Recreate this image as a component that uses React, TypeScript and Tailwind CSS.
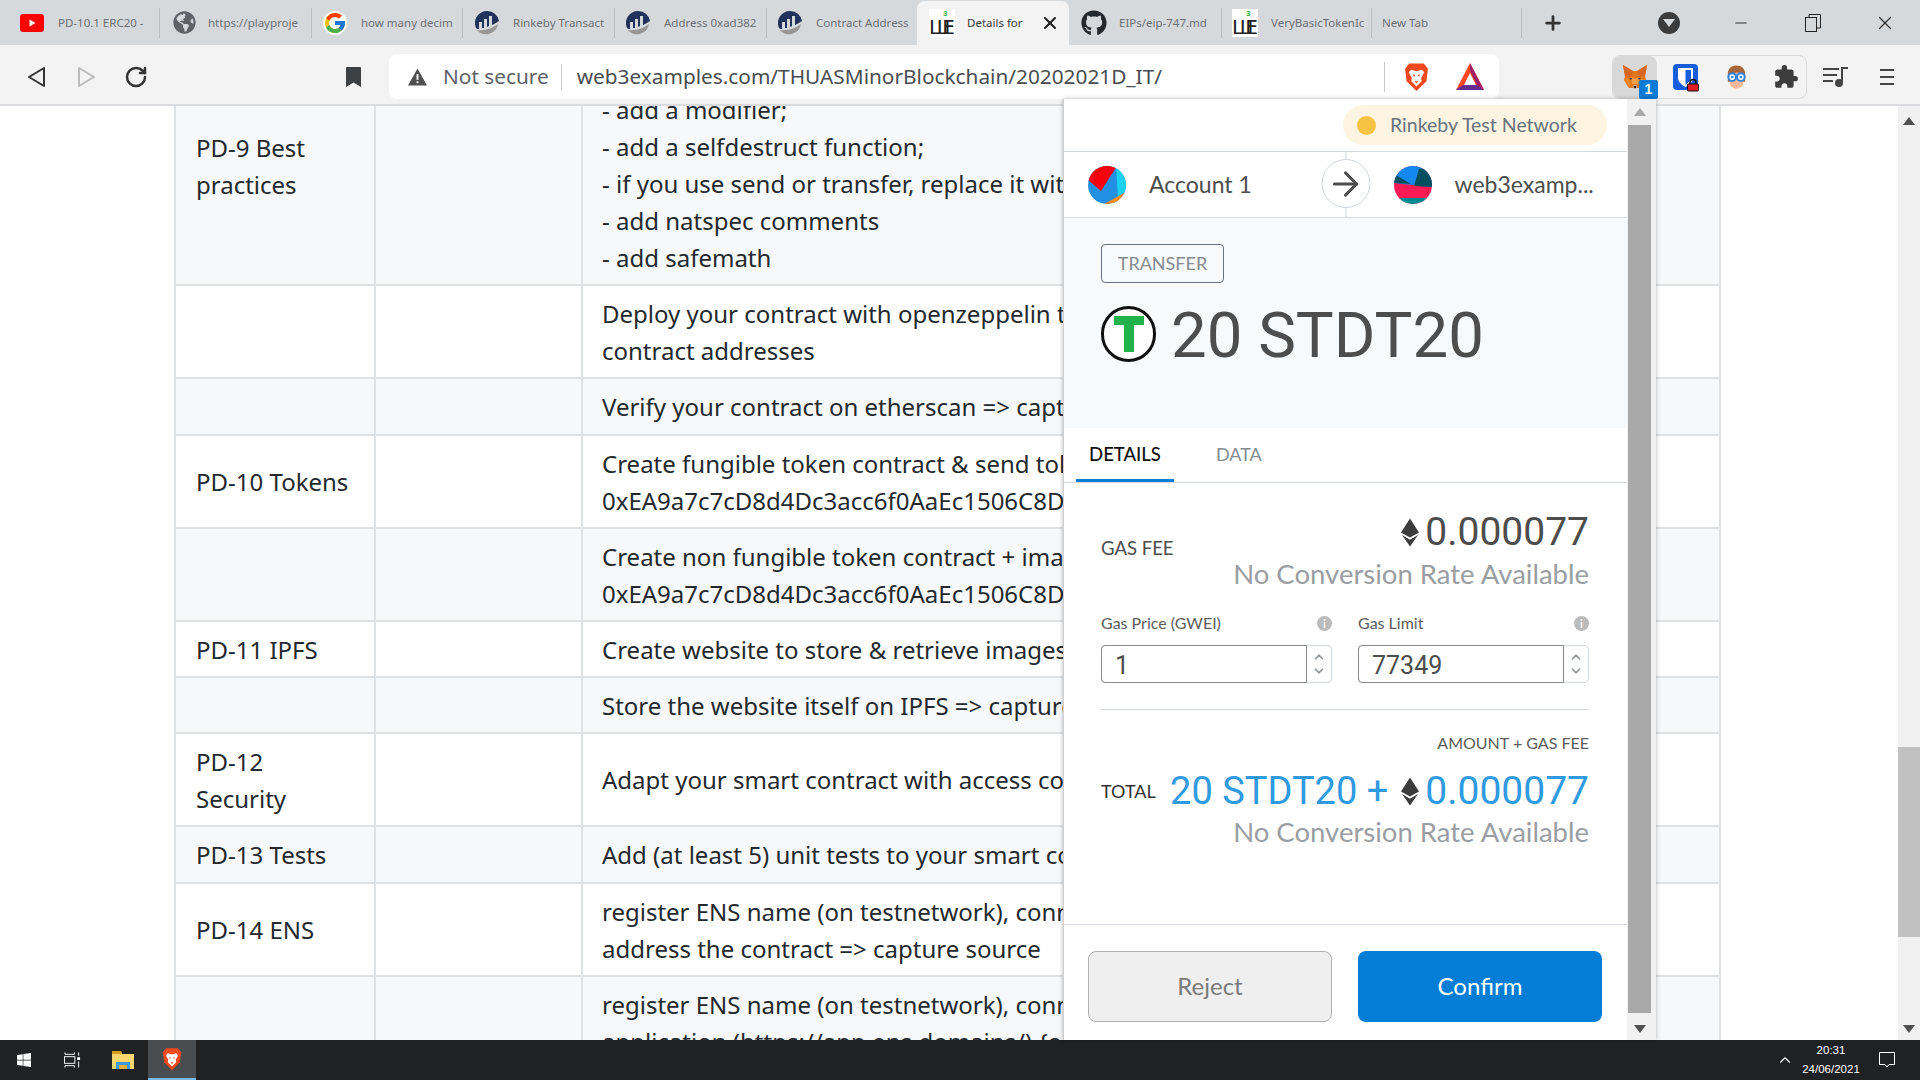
import { FaGithub, FaGlobeAmericas, FaWindows } from 'react-icons/fa'
import { FcGoogle } from 'react-icons/fc'
import { MdExtension } from 'react-icons/md'
import { ArrowRight, ChevronDown, ChevronUp, Plus, X, Minus, RotateCw } from 'lucide-react'

function YoutubeIcon() {
  return (
    <svg viewBox="0 0 24 18" className="h-[18px] w-[24px] shrink-0">
      <rect width="24" height="18" rx="3" fill="#f00" />
      <path d="M9.5 5.5 L15.5 9 L9.5 12.5 Z" fill="#fff" />
    </svg>
  )
}

function EtherscanIcon() {
  return (
    <svg viewBox="0 0 24 24" className="h-[24px] w-[24px] shrink-0">
      <path d="M2 19 A12 12 0 0 0 23 13 C18 17 10 20 2 19 Z" fill="#979695" />
      <path d="M12 0 A12 12 0 0 0 1 17 L1 17 C2 18 3 18 4 18 V11 H7 V17 L9 17 V8 H12 V16 L14 15 V5 H17 V14 C20 13 22 11 24 10 A12 12 0 0 0 12 0 Z" fill="#21325b" />
    </svg>
  )
}

function WeLogo() {
  return (
    <svg viewBox="0 0 26 28" className="h-[28px] w-[26px] shrink-0">
      <rect width="26" height="28" fill="#fff" />
      <text x="14" y="7" fontSize="8" fontWeight="700" fill="#3fae49" fontFamily="Liberation Sans, sans-serif">3</text>
      <text x="0" y="25" fontSize="20" fontWeight="400" fill="#222" fontFamily="DejaVu Sans, sans-serif" textLength="26">ШE</text>
    </svg>
  )
}

function BraveIcon({ size }: { size: string }) {
  return (
    <svg viewBox="0 0 24 28" className={size}>
      <path d="M5 1 H19 L23 6 L21.5 18 L12 27.5 L2.5 18 L1 6 Z" fill="#f1491d" />
      <path d="M7 7 L12 8.5 L17 7 L19.5 9.5 L16.5 15 L17 18 L12 23 L7 18 L7.5 15 L4.5 9.5 Z" fill="#fff" />
      <path d="M9 11 L11 13 L9 13.5 Z M15 11 L13 13 L15 13.5 Z M10 18 H14 L12 20 Z" fill="#f1491d" />
    </svg>
  )
}

function BatIcon() {
  return (
    <svg viewBox="0 0 30 30" className="h-[30px] w-[30px]">
      <path d="M15 1 L29 28 H1 Z" fill="#ff4724" />
      <path d="M15 1 L29 28 L22 23 L15 9 Z" fill="#9e1f63" />
      <path d="M1 28 H29 L22 23 H8 Z" fill="#662d91" />
      <path d="M15 11 L21 23 H9 Z" fill="#fff" />
    </svg>
  )
}

function FoxIcon() {
  return (
    <svg viewBox="0 0 26 26" className="h-[26px] w-[26px]">
      <path d="M1 1 L11 7 H15 L25 1 L23 12 L24 16 L19 24 H15 L13 22 L11 24 H7 L2 16 L3 12 Z" fill="#e2761b" />
      <path d="M1 1 L11 7 L9 13 L3 12 Z M25 1 L15 7 L17 13 L23 12 Z" fill="#d7671f" />
      <path d="M2 16 L7 14 L9 19 L7 24 Z M24 16 L19 14 L17 19 L19 24 Z" fill="#f6851b" />
      <path d="M9 13 L13 15 L17 13 L16 20 H10 Z" fill="#f6a04d" />
      <path d="M11 21 H15 L14 25 H12 Z" fill="#c0ad9e" />
      <path d="M12 22 H14 V24 H12 Z" fill="#24221f" />
      <path d="M7 14 L10 14 L9 16 Z M19 14 L16 14 L17 16 Z" fill="#233447" />
    </svg>
  )
}

function BitwardenIcon() {
  return (
    <div className="relative h-[26px] w-[25px]">
      <svg viewBox="0 0 25 26" className="h-[26px] w-[25px]">
        <rect width="25" height="26" rx="4" fill="#175ddc" />
        <path d="M5 4 H20 V14 C20 18 16 21 12.5 23 C9 21 5 18 5 14 Z" fill="#fff" />
        <path d="M12.5 6 H18 V14 C18 17 15 19 12.5 20.5 Z" fill="#175ddc" />
      </svg>
      <svg viewBox="0 0 12 13" className="absolute -bottom-[2px] -right-[1px] h-[14px] w-[12px]">
        <path d="M3 6 V4 A3 3 0 0 1 9 4 V6" fill="none" stroke="#111" strokeWidth="1.5" />
        <rect x="0.5" y="5.5" width="11" height="7" rx="1" fill="#e01b24" stroke="#111" />
      </svg>
    </div>
  )
}

function AvatarIcon() {
  return (
    <svg viewBox="0 0 24 26" className="h-[26px] w-[23px]">
      <path d="M3 12 C2 3 8 1 12 1 C17 1 22 4 21 13 L21 18 H3 Z" fill="#a9683a" />
      <path d="M5 10 C9 9 15 7 19 10 V19 C19 23 15 25 12 25 C9 25 5 23 5 19 Z" fill="#f3b79a" />
      <circle cx="7.5" cy="13" r="4" fill="#fff" stroke="#2f80d8" strokeWidth="2" />
      <circle cx="16.5" cy="13" r="4" fill="#fff" stroke="#2f80d8" strokeWidth="2" />
      <circle cx="7.5" cy="13" r="1.4" fill="#2f80d8" />
      <circle cx="16.5" cy="13" r="1.4" fill="#2f80d8" />
    </svg>
  )
}

function PlaylistIcon() {
  return (
    <svg viewBox="0 0 26 22" className="h-[22px] w-[26px]">
      <path d="M0 3 H16 M0 9 H14 M0 15 H10" stroke="#444" strokeWidth="2" />
      <path d="M19 17 V2 H25" stroke="#444" strokeWidth="2" fill="none" />
      <circle cx="16" cy="17" r="4" fill="#444" />
    </svg>
  )
}

function FolderIcon() {
  return (
    <svg viewBox="0 0 22 18" className="h-[18px] w-[22px]">
      <path d="M0 0 H9 L10 3 H22 V18 H0 Z" fill="#ffd76e" />
      <path d="M0 0 H9 L10 3 H0 Z" fill="#d29e1b" />
      <path d="M4 18 V11 H18 V18 H15 V14 H7 V18 Z" fill="#3f97dd" />
      <rect x="7" y="14" width="8" height="4" fill="#e3b23c" />
    </svg>
  )
}

function TaskViewIcon() {
  return (
    <svg viewBox="0 0 18 16" className="h-[16px] w-[17px]">
      <path d="M1 0 V2 H11 V0 M1 16 V14 H11 V16" stroke="#fff" fill="none" />
      <rect x="0.5" y="4.5" width="11" height="7" stroke="#fff" fill="none" />
      <rect x="14" y="5" width="3" height="3" fill="#fff" />
      <path d="M15.5 0 V3.5 M15.5 9.5 V16" stroke="#fff" />
    </svg>
  )
}

function EthIcon({ className }: { className: string }) {
  return (
    <svg viewBox="0 0 18 28" className={className}>
      <path d="M9 0 L18 14 L9 19 L0 14 Z" fill="#3c3c3d" />
      <path d="M9 21 L17 16.5 L9 28 L1 16.5 Z" fill="#3c3c3d" />
      <path d="M9 21 L3 17.5 L9 19.8 L15 17.5 Z" fill="#fff" />
    </svg>
  )
}

function InfoDot() {
  return (
    <span className="flex h-[15px] w-[15px] items-center justify-center rounded-full bg-[#bbbbbb] text-[11px] font-bold leading-none text-white">
      i
    </span>
  )
}

function Triangle({ up, color = '#505050' }: { up?: boolean; color?: string }) {
  return (
    <svg viewBox="0 0 12 8" className="h-[8px] w-[12px]">
      <path d={up ? 'M6 0 L12 8 H0 Z' : 'M0 0 H12 L6 8 Z'} fill={color} />
    </svg>
  )
}

const tabs = [
  { icon: <YoutubeIcon />, title: 'PD-10.1 ERC20 -', w: 'w-[159px]', pad: 'pl-[20px]', gap: 'gap-[14px]' },
  { icon: <FaGlobeAmericas className="h-[23px] w-[23px] shrink-0 text-[#5f6368]" />, title: 'https://playproje', w: 'w-[151px]', pad: 'pl-[13px]', gap: 'gap-[12px]' },
  { icon: <FcGoogle className="h-[24px] w-[24px] shrink-0 rounded-full bg-white" />, title: 'how many decim', w: 'w-[150px]', pad: 'pl-[11px]', gap: 'gap-[14px]' },
  { icon: <EtherscanIcon />, title: 'Rinkeby Transact', w: 'w-[151px]', pad: 'pl-[12px]', gap: 'gap-[14px]' },
  { icon: <EtherscanIcon />, title: 'Address 0xad382', w: 'w-[151px]', pad: 'pl-[11px]', gap: 'gap-[14px]' },
  { icon: <EtherscanIcon />, title: 'Contract Address', w: 'w-[150px]', pad: 'pl-[11px]', gap: 'gap-[14px]' },
]

const tabsAfter = [
  { icon: <FaGithub className="h-[26px] w-[26px] shrink-0 text-[#24292e]" />, title: 'EIPs/eip-747.md', w: 'w-[152px]', pad: 'pl-[12px]', gap: 'gap-[12px]' },
  { icon: <WeLogo />, title: 'VeryBasicTokenIc', w: 'w-[149px]', pad: 'pl-[10px]', gap: 'gap-[13px]' },
  { icon: null, title: 'New Tab', w: 'w-[149px]', pad: 'pl-[10px]', gap: 'gap-0' },
]

function Tab({ tab }: { tab: (typeof tabs)[number] }) {
  return (
    <div className={`flex h-full items-center overflow-hidden ${tab.w} ${tab.pad} ${tab.gap}`}>
      {tab.icon}
      <span className="whitespace-nowrap text-[11.5px] text-[#6b6f74]">{tab.title}</span>
    </div>
  )
}

function TabSep() {
  return <div className="h-[30px] w-px shrink-0 bg-[#b9bdc1]" />
}

function TabBar() {
  return (
    <div className="flex h-[45px] items-center bg-[#d6d9dc]">
      <Tab tab={tabs[0]} />
      <TabSep />
      <Tab tab={tabs[1]} />
      <TabSep />
      <Tab tab={tabs[2]} />
      <TabSep />
      <Tab tab={tabs[3]} />
      <TabSep />
      <Tab tab={tabs[4]} />
      <TabSep />
      <Tab tab={tabs[5]} />
      <div className="flex h-[44px] w-[152px] items-center self-end rounded-t-[8px] bg-[#f3f3f3] pl-[12px]">
        <WeLogo />
        <span className="ml-[12px] w-[62px] whitespace-nowrap text-[11.5px] text-[#3c4043]">Details for</span>
        <X className="ml-[11px] h-[20px] w-[20px] text-[#222]" strokeWidth={2.5} />
      </div>
      <Tab tab={tabsAfter[0]} />
      <TabSep />
      <Tab tab={tabsAfter[1]} />
      <TabSep />
      <Tab tab={tabsAfter[2]} />
      <TabSep />
      <Plus className="ml-[20px] h-[22px] w-[22px] text-[#333]" strokeWidth={3} />
      <div className="ml-[94px] flex h-[22px] w-[22px] items-center justify-center rounded-full bg-[#3c3c3c]">
        <Triangle color="#d6d9dc" />
      </div>
      <Minus className="ml-[52px] h-[18px] w-[18px] text-[#333]" strokeWidth={1.5} />
      <svg viewBox="0 0 16 18" className="ml-[55px] h-[18px] w-[16px]">
        <rect x="0.5" y="3.5" width="11" height="14" fill="none" stroke="#222" />
        <path d="M4 3 V0.5 H15.5 V14 H12" fill="none" stroke="#222" />
      </svg>
      <X className="ml-[53px] h-[22px] w-[22px] text-[#333]" strokeWidth={1.3} />
    </div>
  )
}

function Toolbar() {
  return (
    <div className="flex h-[61px] shrink-0 items-center border-b-2 border-[#dadce0] bg-[#f3f3f3] pt-[4px]">
      <svg viewBox="0 0 17 20" className="ml-[28px] h-[20px] w-[17px]">
        <path d="M16 1 L1 10 L16 19 Z" fill="none" stroke="#333" strokeWidth="2" strokeLinejoin="round" />
      </svg>
      <svg viewBox="0 0 17 20" className="ml-[33px] h-[20px] w-[17px]">
        <path d="M1 1 L16 10 L1 19 Z" fill="none" stroke="#bbb" strokeWidth="2" strokeLinejoin="round" />
      </svg>
      <RotateCw className="ml-[29px] h-[24px] w-[24px] text-[#333]" strokeWidth={2.5} />
      <svg viewBox="0 0 15 20" className="ml-[198px] h-[20px] w-[15px]">
        <path d="M0 1 Q0 0 1 0 H14 Q15 0 15 1 V20 L7.5 15.5 L0 20 Z" fill="#3c4043" />
      </svg>
      <div className="ml-[28px] flex h-[45px] w-[1110px] items-center rounded-[8px] bg-white">
        <svg viewBox="0 0 20 18" className="ml-[19px] h-[18px] w-[19px]">
          <path d="M10 0 L20 18 H0 Z" fill="#505050" />
          <rect x="9" y="6" width="2" height="6" fill="#fff" />
          <rect x="9" y="13.5" width="2" height="2" fill="#fff" />
        </svg>
        <span className="ml-[16px] whitespace-nowrap font-['Noto_Sans',sans-serif] text-[20.8px] text-[#5f6368]">Not secure</span>
        <div className="ml-[12px] h-[26px] w-px bg-[#c4c6c8]" />
        <span className="ml-[15px] whitespace-nowrap font-['Noto_Sans',sans-serif] text-[20.8px] text-[#4a4d51]">web3examples.com/THUASMinorBlockchain/20202021D_IT/</span>
        <div className="ml-auto h-[30px] w-px bg-[#c4c6c8]" />
        <div className="ml-[19px] flex items-center">
          <BraveIcon size="h-[30px] w-[25px]" />
        </div>
        <div className="ml-[26px] mr-[14px] flex items-center">
          <BatIcon />
        </div>
      </div>
      <div className="ml-[113px] flex h-[44px] w-[195px] items-center rounded-[8px] border border-[#d8d8d8]">
        <div className="relative flex h-full w-[44px] items-center justify-center rounded-[8px] bg-[#d8d8d8]">
          <FoxIcon />
          <span className="absolute -bottom-[1px] -right-[1px] flex h-[19px] w-[19px] items-center justify-center rounded-[2px] bg-[#0b7bd6] font-['Liberation_Sans',sans-serif] text-[14px] font-bold text-white">1</span>
        </div>
        <div className="ml-[16px]"><BitwardenIcon /></div>
        <div className="ml-[27px]"><AvatarIcon /></div>
        <MdExtension className="ml-[25px] h-[26px] w-[26px] text-[#3c3c3c]" />
      </div>
      <div className="ml-[16px]"><PlaylistIcon /></div>
      <div className="ml-[31px] flex h-[16px] w-[14px] flex-col justify-between">
        <div className="h-[2px] bg-[#444]" />
        <div className="h-[2px] bg-[#444]" />
        <div className="h-[2px] bg-[#444]" />
      </div>
    </div>
  )
}

const rows: { c1?: string[]; c3: string[]; h: string; gray?: boolean; clip?: boolean }[] = [
  { c1: ['PD-9 Best', 'practices'], c3: ['- add a modifier;', '- add a selfdestruct function;', '- if you use send or transfer, replace it with', '- add natspec comments', '- add safemath'], h: 'h-[238px]', gray: true, clip: true },
  { c3: ['Deploy your contract with openzeppelin to get', 'contract addresses'], h: 'h-[93px]' },
  { c3: ['Verify your contract on etherscan => capture'], h: 'h-[57px]', gray: true },
  { c1: ['PD-10 Tokens'], c3: ['Create fungible token contract & send tokens', '0xEA9a7c7cD8d4Dc3acc6f0AaEc1506C8D'], h: 'h-[93px]' },
  { c3: ['Create non fungible token contract + image', '0xEA9a7c7cD8d4Dc3acc6f0AaEc1506C8D'], h: 'h-[93px]', gray: true },
  { c1: ['PD-11 IPFS'], c3: ['Create website to store & retrieve images'], h: 'h-[56px]' },
  { c3: ['Store the website itself on IPFS => capture'], h: 'h-[56px]', gray: true },
  { c1: ['PD-12', 'Security'], c3: ['Adapt your smart contract with access control'], h: 'h-[93px]' },
  { c1: ['PD-13 Tests'], c3: ['Add (at least 5) unit tests to your smart contract'], h: 'h-[57px]', gray: true },
  { c1: ['PD-14 ENS'], c3: ['register ENS name (on testnetwork), connect', 'address the contract => capture source'], h: 'h-[93px]' },
  { c3: ['register ENS name (on testnetwork), connect', 'application (https://app.ens.domains/) {or'], h: 'h-[93px]', gray: true },
]

function PageTable() {
  return (
    <div className="flex min-h-0 flex-1 overflow-hidden bg-white">
      <div className="ml-[174px] mt-[-58px] w-[1547px] shrink-0 border-l-2 border-r-2 border-[#dfe2e5] font-['Noto_Sans',sans-serif] text-[24px] leading-[37px] text-[#24292e]">
        {rows.map((row, i) => (
          <div key={i} className={`flex ${row.h} border-b-2 border-[#dfe2e5] ${row.gray ? 'bg-[#f6f8fa]' : 'bg-white'}`}>
            <div className="flex w-[198px] shrink-0 flex-col justify-center pl-[20px]">
              {row.c1?.map((l) => <div key={l}>{l}</div>)}
            </div>
            <div className="w-[207px] shrink-0 border-l-2 border-[#dfe2e5]" />
            <div className={`flex min-w-0 flex-1 flex-col border-l-2 border-[#dfe2e5] pl-[19px] ${row.clip ? 'justify-end pb-[8px]' : 'justify-center'}`}>
              {row.c3.map((l) => <div key={l} className="whitespace-nowrap">{l}</div>)}
            </div>
          </div>
        ))}
      </div>
      <div className="ml-auto flex w-[22px] shrink-0 flex-col bg-[#f1f1f1]">
        <div className="flex h-[30px] items-center justify-center"><Triangle up /></div>
        <div className="mt-[611px] h-[190px] bg-[#c1c1c1]" />
        <div className="mt-auto flex h-[22px] items-center justify-center"><Triangle /></div>
      </div>
    </div>
  )
}

function Taskbar() {
  return (
    <div className="flex h-[40px] shrink-0 items-center bg-[#1f2123] text-white">
      <FaWindows className="ml-[16px] h-[16px] w-[16px]" />
      <div className="ml-[32px]"><TaskViewIcon /></div>
      <div className="ml-[31px]"><FolderIcon /></div>
      <div className="ml-[14px] flex h-full w-[48px] items-center justify-center border-b-2 border-[#76b9ed] bg-[#4a4d4f]">
        <BraveIcon size="h-[24px] w-[20px]" />
      </div>
      <ChevronUp className="ml-auto h-[18px] w-[18px]" strokeWidth={1.5} />
      <div className="ml-[1px] flex w-[72px] flex-col items-center font-['Liberation_Sans',sans-serif] text-[11.5px] leading-[19px]">
        <span>20:31</span>
        <span>24/06/2021</span>
      </div>
      <svg viewBox="0 0 16 16" className="ml-[12px] mr-[25px] h-[16px] w-[16px]">
        <path d="M0.5 0.5 H15.5 V12.5 H10 L8 15 L6 12.5 H0.5 Z" fill="none" stroke="#fff" />
      </svg>
    </div>
  )
}

function NumberStepper({ value }: { value: string }) {
  return (
    <div className="flex h-[38px] flex-1 rounded-[4px] border border-[#d2d8dd]">
      <div className="-m-px flex h-[38px] flex-1 items-center rounded-l-[4px] border border-[#888b8f] pl-[13px] pt-[3px] font-['Roboto',sans-serif] text-[25px] text-[#4d4d4d]">
        {value}
      </div>
      <div className="flex w-[25px] flex-col items-center justify-center text-[#8f9499]">
        <ChevronUp className="h-[14px] w-[14px]" strokeWidth={3} />
        <ChevronDown className="h-[14px] w-[14px]" strokeWidth={3} />
      </div>
    </div>
  )
}

function AccountBlob({ kind }: { kind: 'from' | 'to' }) {
  return kind === 'from' ? (
    <svg viewBox="0 0 38 38" className="h-[38px] w-[38px] shrink-0 rounded-full">
      <rect width="38" height="38" fill="#2190e3" />
      <path d="M28 0 L38 8 V24 L30 32 Z" fill="#19d2f0" />
      <path d="M38 26 V38 H16 Z" fill="#f58c1f" />
      <path d="M0 0 H29 L13 25 L0 14 Z" fill="#f5000b" />
    </svg>
  ) : (
    <svg viewBox="0 0 38 38" className="h-[38px] w-[38px] shrink-0 rounded-full">
      <rect width="38" height="38" fill="#fc1a54" />
      <path d="M0 0 H38 V21 L0 17 Z" fill="#1488f0" />
      <path d="M0 8 L17 18 L0 17 Z" fill="#044e60" />
      <path d="M25 3 L30 2 H38 V21 L20 20 Z" fill="#044e60" />
      <path d="M0 32 H38 V38 H0 Z" fill="#038b94" />
    </svg>
  )
}

function MetamaskPopup() {
  return (
    <div className="absolute left-[1063px] top-[99px] flex h-[941px] w-[593px] border-l border-[#cfcfcf] bg-white font-['Lato',sans-serif] shadow-[0_0_4px_rgba(0,0,0,0.3)]">
      <div className="flex w-[563px] flex-col">
        <div className="flex h-[53px] shrink-0 items-start justify-end border-b border-[#d2d8dd] pr-[20px] pt-[6px]">
          <div className="flex h-[40px] w-[264px] items-center rounded-full bg-[#fdf4e2] pl-[14px]">
            <div className="h-[19px] w-[19px] rounded-full bg-[#f6c343]" />
            <span className="ml-[14px] text-[19.5px] text-[#6a737d]">Rinkeby Test Network</span>
          </div>
        </div>
        <div className="relative flex h-[66px] shrink-0 items-center border-b border-[#d2d8dd]">
          <div className="flex w-1/2 items-center pl-[24px]">
            <AccountBlob kind="from" />
            <span className="ml-[23px] text-[23px] text-[#4d4d4d]">Account 1</span>
          </div>
          <div className="flex w-1/2 items-center pl-[48px]">
            <AccountBlob kind="to" />
            <span className="ml-[23px] text-[23px] text-[#4d4d4d]">web3examp...</span>
          </div>
          <div className="absolute left-1/2 top-0 h-full w-px -translate-x-1/2 bg-[#d2d8dd]" />
          <div className="absolute left-1/2 top-[7px] flex h-[49px] w-[49px] -translate-x-1/2 items-center justify-center rounded-full border border-[#d2d8dd] bg-white">
            <ArrowRight className="h-[38px] w-[38px] text-[#4d4d4d]" strokeWidth={1.9} />
          </div>
        </div>
        <div className="h-[210px] shrink-0 bg-[#f8f9fa] pl-[37px] pt-[26px]">
          <div className="flex h-[39px] w-[123px] items-center justify-center rounded-[4px] border border-[#6a737d] text-[18px] text-[#858b92]">TRANSFER</div>
          <div className="mt-[21px] flex items-center">
            <div className="flex h-[56px] w-[55px] items-center justify-center rounded-full border-[3px] border-[#111] bg-white">
              <svg viewBox="0 0 30 36" className="h-[36px] w-[30px]">
                <path d="M0 0 H30 V9 H20 V36 H10 V9 H0 Z" fill="#22b24c" />
              </svg>
            </div>
            <span className="ml-[15px] pt-[4px] font-['Roboto',sans-serif] text-[63.5px] leading-[56px] text-[#4d4d4d]">20 STDT20</span>
          </div>
        </div>
        <div className="flex h-[55px] shrink-0 border-b border-[#d2d8dd] pl-[12px]">
          <div className="flex h-[54px] w-[98px] items-center justify-center border-b-[3px] border-[#037dd6] pt-[3px] text-[18.5px] font-medium text-[#111]">DETAILS</div>
          <div className="ml-[42px] flex h-[52px] items-center text-[18px] text-[#858b92]">DATA</div>
        </div>
        <div className="flex h-[441px] shrink-0 flex-col pl-[37px] pr-[38px] pt-[27px]">
          <div className="flex items-center justify-between">
            <span className="mb-[6px] text-[18.5px] text-[#4d4d4d]">GAS FEE</span>
            <div className="flex flex-col items-end">
              <div className="flex h-[44px] items-center">
                <EthIcon className="h-[29px] w-[18px]" />
                <span className="ml-[6px] font-['Roboto',sans-serif] text-[39px] text-[#4d4d4d]">0.000077</span>
              </div>
              <div className="flex h-[40px] items-center text-[27.5px] text-[#9a9ea3]">No Conversion Rate Available</div>
            </div>
          </div>
          <div className="mt-[17px] flex gap-[26px]">
            <div className="flex h-[24px] flex-1 items-center justify-between text-[16px] text-[#5d5d5d]">
              <span>Gas Price (GWEI)</span>
              <InfoDot />
            </div>
            <div className="flex h-[24px] flex-1 items-center justify-between text-[16px] text-[#5d5d5d]">
              <span>Gas Limit</span>
              <InfoDot />
            </div>
          </div>
          <div className="mt-[10px] flex gap-[26px]">
            <NumberStepper value="1" />
            <NumberStepper value="77349" />
          </div>
          <div className="mt-[26px] h-px bg-[#d2d8dd]" />
          <div className="mt-[23px] flex h-[20px] items-center justify-end text-[16px] text-[#5d5d5d]">AMOUNT + GAS FEE</div>
          <div className="mt-[16px] flex h-[44px] items-center justify-between">
            <span className="text-[18px] text-[#333]">TOTAL</span>
            <div className="flex items-center font-['Roboto',sans-serif] text-[39px] text-[#2f9ae0]">
              <span className="text-[38px]">20 STDT20 +</span>
              <EthIcon className="ml-[13px] h-[29px] w-[18px]" />
              <span className="ml-[6px]">0.000077</span>
            </div>
          </div>
          <div className="mt-[-1px] flex h-[40px] items-center justify-end text-[27.5px] text-[#9a9ea3]">No Conversion Rate Available</div>
        </div>
        <div className="flex gap-[26px] border-t border-[#d2d8dd] pl-[24px] pt-[26px]">
          <button className="h-[71px] w-[244px] rounded-[8px] border border-[#b0b0b0] bg-[#efefef] pb-[2px] text-[24px] text-[#7a7a7a]">Reject</button>
          <button className="h-[71px] w-[244px] rounded-[8px] bg-[#037dd6] pb-[2px] text-[24px] text-white">Confirm</button>
        </div>
      </div>
      <div className="flex flex-1 flex-col bg-[#f1f1f1]">
        <div className="flex h-[26px] items-center justify-center pr-[4px]"><Triangle up color="#a8a8a8" /></div>
        <div className="ml-[1px] h-[888px] w-[23px] bg-[#a8a8a8]" />
        <div className="flex h-[26px] items-center justify-center pr-[4px] pt-[6px]"><Triangle /></div>
      </div>
    </div>
  )
}

export default function App() {
  return (
    <div className="relative flex h-[1080px] w-[1920px] flex-col overflow-hidden bg-white font-['Noto_Sans',sans-serif]">
      <TabBar />
      <Toolbar />
      <PageTable />
      <Taskbar />
      <MetamaskPopup />
    </div>
  )
}
